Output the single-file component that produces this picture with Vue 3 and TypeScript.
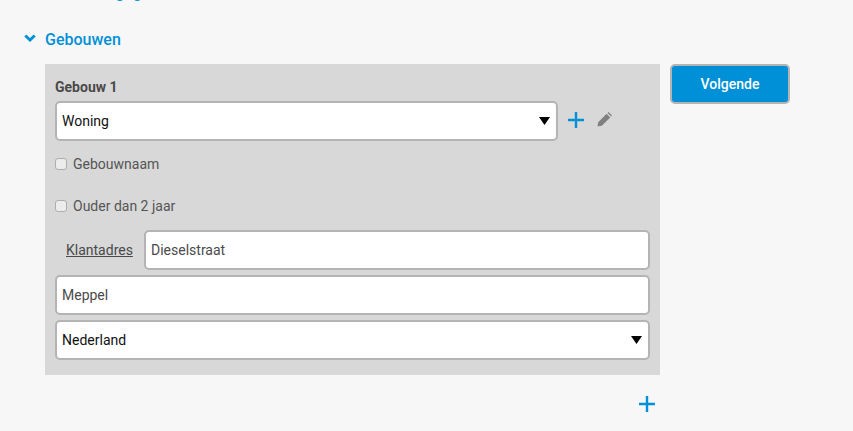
<script setup lang="ts">
const selectArrow = 'M0 0H11L5.5 8Z'
</script>

<template>
  <main class="page">
    <h2 class="cut-title">Installatiegegevens</h2>

    <div class="section-head">
      <svg class="chevron" width="12" height="9" viewBox="0 0 12 9">
        <path d="M1.3 1.4 6 6.1 10.7 1.4" fill="none" stroke="#0090d7" stroke-width="2.8" />
      </svg>
      <h2>Gebouwen</h2>
    </div>

    <div class="columns">
      <div class="left-col">
        <section class="panel">
          <label class="panel-title">Gebouw 1</label>
          <div class="type-row">
            <div class="field select type-select">
              <span>Woning</span>
              <svg width="11" height="8" viewBox="0 0 11 8"><path :d="selectArrow" fill="#000" /></svg>
            </div>
            <svg class="plus" width="16" height="16" viewBox="0 0 16 16">
              <path d="M8 0V16M0 8H16" stroke="#0090d7" stroke-width="2.4" />
            </svg>
            <svg class="pencil" width="15" height="15" viewBox="0 0 15 15">
              <path d="M0.5 14.5 1.2 10.2 9.6 1.8 13.2 5.4 4.8 13.8Z M10.6 0.9 11.6 0 15 3.4 14.1 4.4Z" fill="#808080" />
            </svg>
          </div>

          <div class="checks">
            <div class="check-row"><span class="box"></span>Gebouwnaam</div>
            <div class="check-row"><span class="box"></span>Ouder dan 2 jaar</div>
          </div>

          <div class="address-row">
            <a class="address-link">Klantadres</a>
            <div class="field grow">Dieselstraat</div>
          </div>
          <div class="field">Meppel</div>
          <div class="field select">
            <span>Nederland</span>
            <svg width="11" height="8" viewBox="0 0 11 8"><path :d="selectArrow" fill="#000" /></svg>
          </div>
        </section>

        <div class="add-row">
          <svg class="plus" width="16" height="16" viewBox="0 0 16 16">
            <path d="M8 0V16M0 8H16" stroke="#0090d7" stroke-width="2.4" />
          </svg>
        </div>
      </div>

      <button class="next">Volgende</button>
    </div>
  </main>
</template>

<style>
html,
body {
  margin: 0;
  background: #f7f7f7;
  overflow: hidden;
}
</style>

<style scoped>
.page {
  width: 853px;
  height: 431px;
  overflow: hidden;
  font-family: Roboto, sans-serif;
  font-size: 14px;
  color: #4a4a4a;
}

.cut-title {
  margin: -17px 0 0 45px;
  height: 19px;
  font-size: 16px;
  line-height: 19px;
  font-weight: 500;
  color: #0090d7;
}

.section-head {
  display: flex;
  align-items: center;
  gap: 9px;
  margin: 27px 0 0 24px;
  height: 20px;
}

.section-head h2 {
  margin: 0;
  font-size: 16px;
  font-weight: 500;
  color: #0090d7;
}

.chevron {
  display: block;
  margin-top: -2px;
}

.columns {
  display: flex;
  align-items: flex-start;
  gap: 10px;
  margin: 15px 0 0 45px;
}

.left-col {
  width: 615px;
}

.panel {
  box-sizing: border-box;
  height: 311px;
  padding: 15px 10px 0;
  background: #d8d8d8;
}

.panel-title {
  display: block;
  height: 22px;
  line-height: 17px;
  font-weight: 700;
}

.type-row {
  display: flex;
  align-items: center;
}

.field {
  box-sizing: border-box;
  display: flex;
  align-items: center;
  height: 40px;
  padding: 0 5px;
  background: #fff;
  border: 2px solid #b4b4b4;
  border-radius: 5px;
  margin-bottom: 5px;
}

.select {
  justify-content: space-between;
  padding-right: 6px;
  color: #111;
}

.type-select {
  width: 503px;
  margin-bottom: 0;
}

.type-row .plus {
  margin-left: 10px;
  margin-top: -3px;
}

.pencil {
  margin-left: 13px;
  margin-top: -3px;
}

.checks {
  padding: 2px 0 3px;
}

.check-row {
  display: flex;
  align-items: center;
  gap: 6px;
  height: 42px;
  color: #555;
}

.box {
  box-sizing: border-box;
  width: 12px;
  height: 12px;
  background: #ececec;
  border: 1px solid #adadad;
  border-radius: 3px;
}

.address-row {
  display: flex;
  align-items: center;
}

.address-link {
  width: 89px;
  padding-left: 11px;
  margin-bottom: 5px;
  box-sizing: border-box;
  text-decoration: underline;
}

.grow {
  flex: 1;
}

.add-row {
  display: flex;
  justify-content: flex-end;
  padding: 21px 5px 0 0;
}

.next {
  box-sizing: border-box;
  width: 120px;
  height: 40px;
  padding: 0;
  background: #0090d7;
  border: 2px solid #b4b4b4;
  border-radius: 5px;
  color: #fff;
  font-family: Roboto, sans-serif;
  font-size: 14px;
  font-weight: 500;
}
</style>
